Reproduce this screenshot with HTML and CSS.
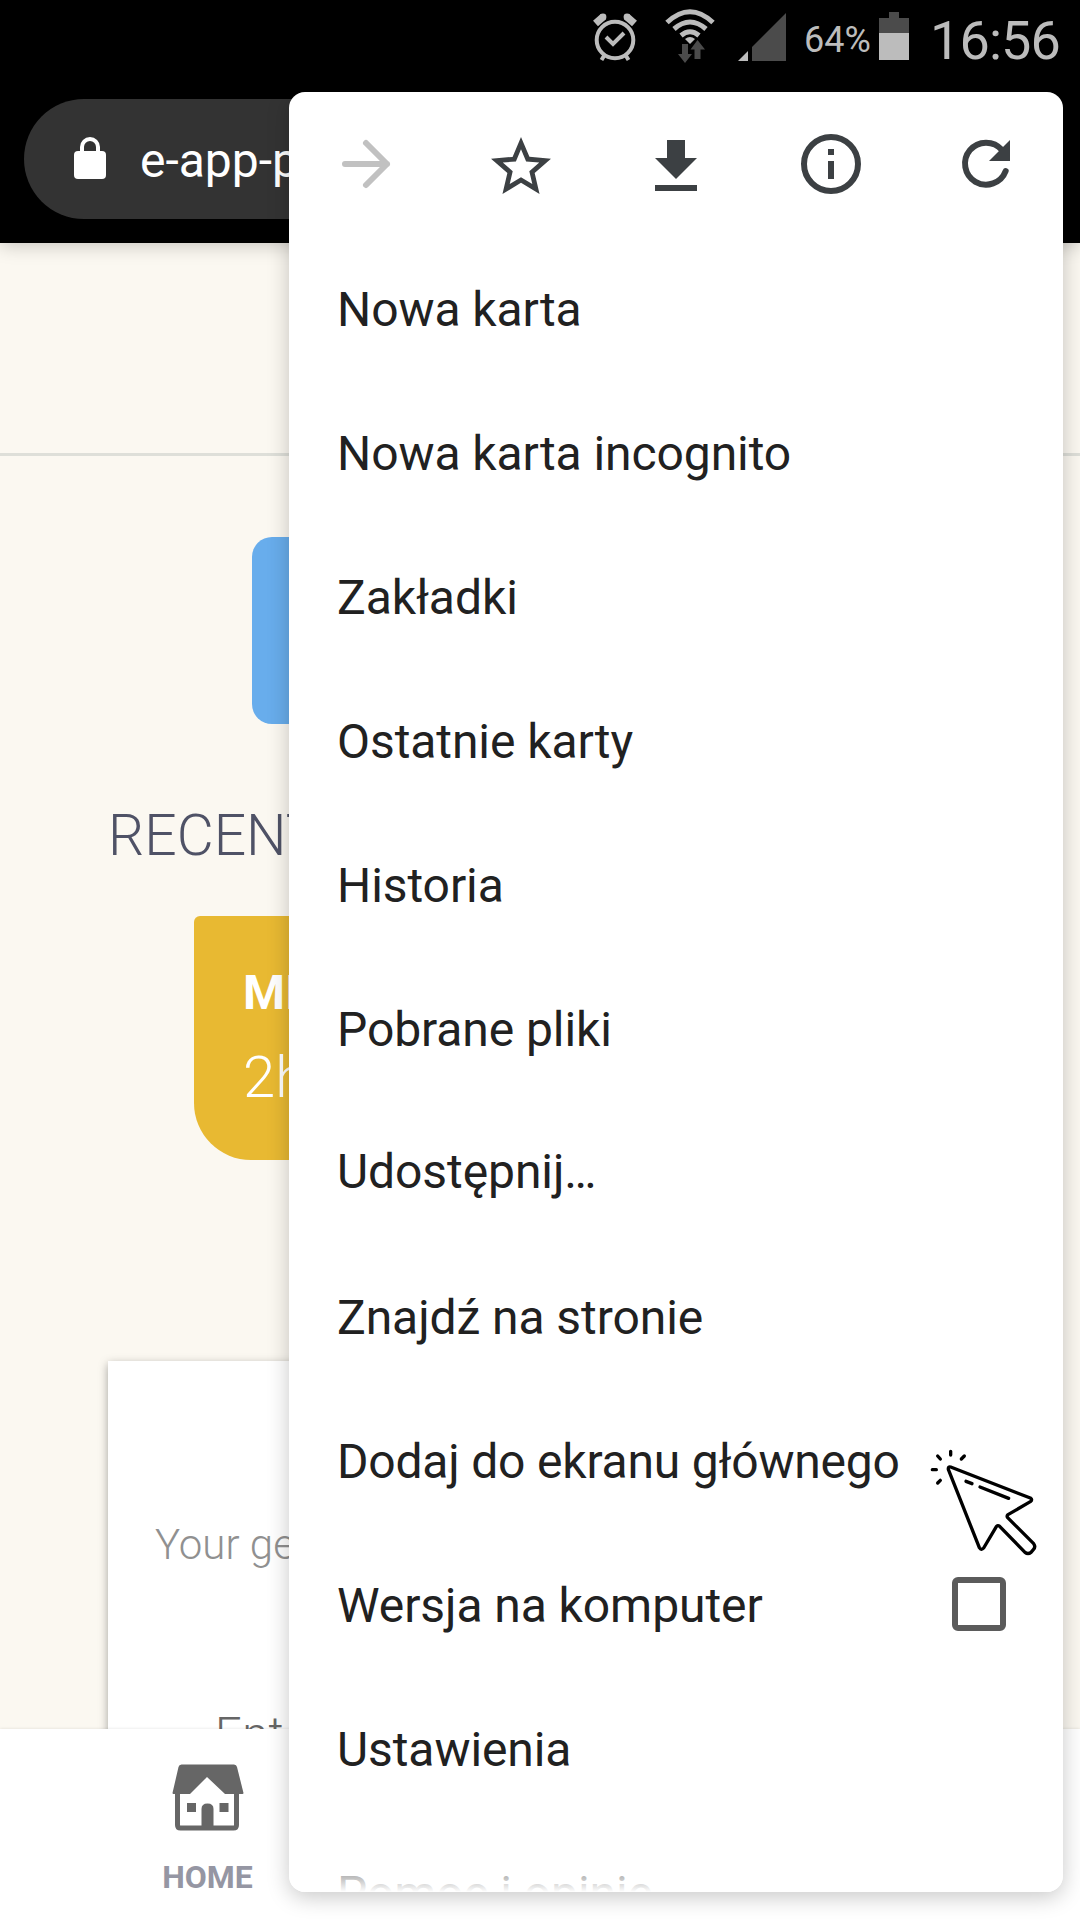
FILE: index.html
```html
<!DOCTYPE html>
<html lang="pl">
<head>
<meta charset="utf-8">
<title>Menu przeglądarki</title>
<link rel="stylesheet" href="styles.css">
</head>
<body>
<div class="screen">
  <header class="chrome">
    <div class="status">
      <svg class="status-alarm" width="46" height="50" viewBox="0 0 46 50" fill="none" stroke="#bcbcbc">
        <circle cx="23" cy="28" r="18.3" stroke-width="4"/>
        <path d="M14 25l7 7 11-11" stroke-width="4"/>
        <path d="M3.500 11.500l8-7M42.500 11.500l-8-7" stroke-width="7.500"/>
        <circle cx="11" cy="5" r="3.400" fill="#bcbcbc" stroke="none"/><circle cx="35" cy="5" r="3.400" fill="#bcbcbc" stroke="none"/>
        <path d="M12.500 43l-3 5M33.500 43l3 5" stroke-width="4"/>
      </svg>
      <svg class="status-wifi" width="50" height="54" viewBox="0 0 50 54" fill="none" stroke="#bcbcbc" stroke-width="5">
        <path d="M2 13.500Q25-8 48 13.500M9 20Q25 6 41 20M16 26.500Q25 19 34 26.500"/>
        <path d="M20 30q5-4 10 0l-5 5z" fill="#bcbcbc" stroke="none"/>
        <path d="M17 35h6v10h4l-7 9-7-9h4zM29.500 50V40.500H25.500L32.500 31l7.500 9.500H35.500V50z" fill="#4b4b4b" stroke="none"/>
      </svg>
      <svg class="status-signal" width="48" height="48" viewBox="0 0 48 48">
        <path d="M14 48V34L48 0v48z" fill="#4b4b4b"/><path d="M0 48l10-10v10z" fill="#bcbcbc"/>
      </svg>
      <span class="status-percent">64%</span>
      <svg class="status-battery" width="30" height="48" viewBox="0 0 30 48">
        <path d="M0 6h10V0h10v6h10v16H0z" fill="#4b4b4b"/><path d="M0 21h30v27H0z" fill="#bcbcbc"/>
      </svg>
      <span class="status-time">16:56</span>
    </div>
    <div class="address">
      <svg class="address-lock" width="32" height="42" viewBox="0 0 32 42">
        <path d="M8 18V10a8 8 0 0 1 16 0v8" fill="none" stroke="#fff" stroke-width="4"/>
        <rect y="14" width="32" height="28" rx="4" fill="#fff"/>
      </svg>
      <span class="address-text">e-app-p</span>
    </div>
  </header>

  <main class="page">
    <div class="page-head"></div>
    <div class="banner"></div>
    <h2 class="heading">RECENT</h2>
    <div class="event">
      <div class="event-name">MI</div>
      <div class="event-time">2h</div>
    </div>
    <div class="card">
      <p class="card-label">Your ge</p>
      <p class="card-input">Ent</p>
    </div>
  </main>

  <nav class="tabs">
    <div class="tab">
      <svg width="72" height="68" viewBox="0 0 72 68">
        <path d="M5.500 28v33q0 3 3 3h53q3 0 3-3V28" fill="none" stroke="#666" stroke-width="5"/>
        <path d="M6.500 3q.5-2.500 3-2.500h52.500q2.500 0 3 2.500L71.500 29q0 1-1 1H53L35 13 18 30H1.500q-1 0-1-1z" fill="#666"/>
        <path d="M29.500 64V45q0-5.500 6-5.500t6 5.500v19z" fill="#666"/>
        <path d="M15 39h9v9h-9zM47.500 39h9v9h-9z" fill="#666"/>
      </svg>
      <span class="tab-name">HOME</span>
    </div>
  </nav>

  <div class="menu">
    <div class="menu-actions">
      <svg width="72" height="72" viewBox="0 0 72 72" fill="none" stroke="#c1c1c1" stroke-width="6" stroke-linecap="round" stroke-linejoin="round"><path d="M15 36h42M36 15l21 21-21 21"/></svg>
      <svg class="low" width="72" height="72" viewBox="0 0 24 24" fill="#3c4043"><path d="M22 9.240l-7.190-.62L12 2 9.190 8.630 2 9.240l5.460 4.730L5.820 21 12 17.270 18.180 21l-1.630-7.030L22 9.240zM12 15.400l-3.760 2.270 1-4.280-3.320-2.880 4.380-.38L12 6.100l1.710 4.040 4.380.38-3.320 2.880 1 4.280L12 15.400z"/></svg>
      <svg class="low" width="72" height="72" viewBox="0 0 24 24" fill="#3c4043"><path d="M19 9h-4V3H9v6H5l7 7 7-7zM5 18v2h14v-2H5z"/></svg>
      <svg width="72" height="72" viewBox="0 0 24 24" fill="#3c4043"><path d="M11 7h2v2h-2zM11 11h2v6h-2z"/><circle cx="12" cy="12" r="9" fill="none" stroke="#3c4043" stroke-width="2"/></svg>
      <svg width="72" height="72" viewBox="0 0 72 72"><path d="M52 22A21 21 0 1 0 55.700 43" fill="none" stroke="#3c4043" stroke-width="6" stroke-linecap="round"/><path d="M60 12v21H39z" fill="#3c4043"/></svg>
    </div>
    <ul class="menu-list">
      <li>Nowa karta</li>
      <li>Nowa karta incognito</li>
      <li>Zakładki</li>
      <li>Ostatnie karty</li>
      <li>Historia</li>
      <li>Pobrane pliki</li>
      <li class="share">Udostępnij…</li>
      <li>Znajdź na stronie</li>
      <li class="add-home">Dodaj do ekranu głównego</li>
      <li>Wersja na komputer <span class="checkbox"></span></li>
      <li>Ustawienia</li>
      <li>Pomoc i opinie</li>
    </ul>
    <div class="menu-fade"></div>
    <svg class="pointer" width="110" height="110" viewBox="90 55 330 330" fill="none" stroke="#000" stroke-width="10" stroke-linecap="round" stroke-linejoin="round">
      <path d="M152 112L391 205q8 5 0 11L324 255q-5 4-1 9l78 78q7 9-1 18l-7 8q-9 7-18 0L299 290q-6-5-10 1l-38 64q-7 8-13-1L145 119q-1-9 7-7z"/>
      <path d="M152 65v11M113 79l8 9M193 79l-9 9M97 120h12M121 152l-8 8M198 155l18 7M240 172l86 34"/>
    </svg>
  </div>
</div>
</body>
</html>
```
FILE: styles.css
```css
* { box-sizing: border-box; }

body {
  margin: 0;
  font-family: Roboto, "Noto Sans", sans-serif;
}

.screen {
  position: relative;
  display: flex;
  flex-direction: column;
  width: 1080px;
  height: 1920px;
  overflow: hidden;
  background: #fbf8f1;
}

/* Browser chrome */
.chrome {
  position: relative;
  flex: none;
  height: 243px;
  background: #000;
  box-shadow: 0 2px 18px rgba(0, 0, 0, .22);
}

.status {
  display: flex;
  justify-content: flex-end;
  height: 99px;
  padding-right: 20px;
  color: #bcbcbc;
}

.status-alarm { margin: 12px 27px 0 0; }
.status-wifi { margin: 9px 23px 0 0; }
.status-signal { margin: 13px 18px 0 0; }
.status-battery { margin: 12px 21px 0 9px; }

.status-percent {
  width: 66px;
  margin-top: 19px;
  font-size: 36px;
  line-height: 42px;
  white-space: nowrap;
}

.status-time {
  width: 130px;
  margin-top: 9px;
  font-size: 54px;
  line-height: 64px;
  letter-spacing: -.9px;
  white-space: nowrap;
}

.address {
  display: flex;
  align-items: center;
  height: 120px;
  margin: 0 24px;
  padding-left: 50px;
  border-radius: 60px;
  background: #333;
  color: #fff;
  font-size: 48px;
}

.address-lock { margin: 0 34px 2px 0; }
.address-text { line-height: 56px; margin-top: 3px; }

/* Web page */
.page {
  flex: none;
  height: 1486px;
  overflow: hidden;
  padding-left: 108px;
}

.page-head {
  height: 213px;
  margin-left: -108px;
  border-bottom: 3px solid #dedfd9;
}

.banner {
  width: 576px;
  height: 187px;
  margin: 81px 0 0 144px;
  border-radius: 20px;
  background: #68adec;
}

.heading {
  margin: 78px 0 0;
  color: #4f5266;
  font-size: 57px;
  font-weight: 300;
  line-height: 68px;
}

.event {
  width: 692px;
  height: 244px;
  margin: 46px 0 0 86px;
  padding: 49px;
  border-radius: 6px 6px 57px 57px;
  background: #e8b932;
  color: #fff;
}

.event-name {
  font-size: 48px;
  font-weight: 700;
  line-height: 56px;
}

.event-time {
  margin-top: 22px;
  font-size: 58px;
  font-weight: 300;
  line-height: 68px;
}

.card {
  width: 864px;
  height: 500px;
  margin-top: 201px;
  padding: 159px 47px 0;
  background: #fff;
  box-shadow: 0 3px 9px rgba(0, 0, 0, .35);
}

.card p { margin: 0; font-weight: 300; }

.card-label {
  color: #909090;
  font-size: 42px;
  line-height: 50px;
}

.card .card-input {
  margin: 137px 0 0 60px;
  color: #666;
  font-size: 47px;
  letter-spacing: .5px;
  line-height: 54px;
}

/* Bottom tabs */
.tabs {
  position: relative;
  flex: 1;
  background: #fff;
  box-shadow: 0 0 3px rgba(0, 0, 0, .12);
}

.tab {
  display: flex;
  flex-direction: column;
  align-items: center;
  width: 415px;
  padding-top: 35px;
}

.tab-name {
  margin-top: 26px;
  color: #9596a3;
  font-size: 32px;
  font-weight: 700;
  line-height: 38px;
}

/* Overflow menu */
.menu {
  position: absolute;
  top: 92px;
  left: 289px;
  width: 774px;
  height: 1800px;
  overflow: hidden;
  border-radius: 16px;
  background: #fff;
  box-shadow: 0 5px 22px rgba(0, 0, 0, .22);
}

.menu-actions {
  display: flex;
  justify-content: space-around;
  align-items: center;
  height: 144px;
}

.menu-actions .low { margin-top: 6px; }

.menu-list {
  margin: 0;
  padding: 2px 57px 0 48px;
  list-style: none;
  color: #212121;
  font-size: 48px;
  letter-spacing: -.08px;
  line-height: 56px;
}

.menu-list li {
  display: flex;
  align-items: center;
  justify-content: space-between;
  height: 144px;
}

.menu-list .share { padding-bottom: 4px; }
.menu-list .add-home { letter-spacing: -.2px; }

.checkbox {
  width: 54px;
  height: 54px;
  margin-bottom: 5px;
  border: 6px solid #5b5b5b;
  border-radius: 6px;
}

.menu-fade {
  position: absolute;
  left: 0;
  right: 0;
  bottom: 0;
  height: 24px;
  background: linear-gradient(rgba(255, 255, 255, .52), #fff);
}

.pointer {
  position: absolute;
  left: 641px;
  top: 1356px;
}
```
